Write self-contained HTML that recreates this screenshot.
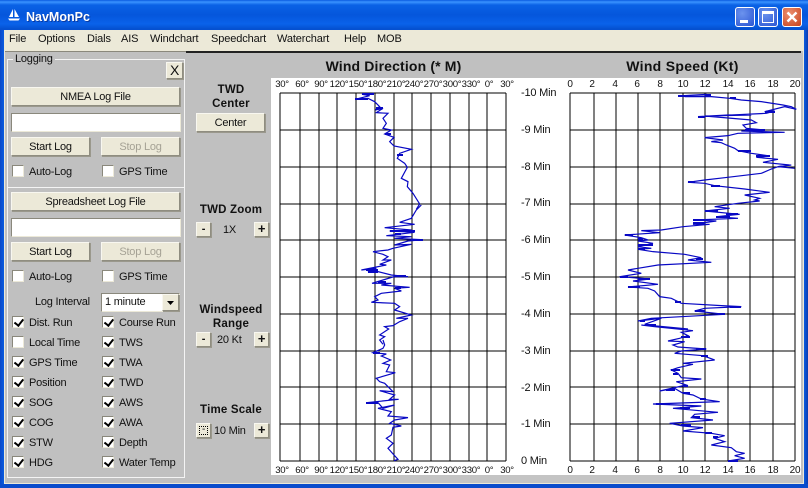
<!DOCTYPE html>
<html><head><meta charset="utf-8">
<style>
html,body{margin:0;padding:0}
body{width:808px;height:488px;overflow:hidden;position:relative;background:#c0c0c0;font-family:"Liberation Sans",sans-serif;font-size:11px;letter-spacing:-.22px;color:#111}
.a{position:absolute;white-space:nowrap}
.btn{position:absolute;box-sizing:border-box;background:#ece9d8;border:1px solid;border-color:#f8f7f0 #8f8d80 #8f8d80 #f8f7f0;box-shadow:1px 1px 0 #9a988c;text-align:center;color:#111;white-space:nowrap}
.dis{color:#a5a295}
.inp{position:absolute;box-sizing:border-box;background:#fff;border:1px solid;border-color:#8a887c #ece9d8 #ece9d8 #8a887c}
.cb{position:absolute;box-sizing:border-box;width:12px;height:12px;background:#fff;border:1px solid;border-color:#8a887c #ece9d8 #ece9d8 #8a887c}
.cb.c::after{content:"";position:absolute;left:2.5px;top:-.5px;width:3.5px;height:7px;border:solid #000;border-width:0 2px 2px 0;transform:rotate(38deg)}
.h{position:absolute;font-weight:bold;font-size:11.5px;text-align:center;color:#111;line-height:14px;letter-spacing:.2px}
.m{position:absolute;top:33px;font-size:11px;letter-spacing:-.12px;color:#111}
</style></head><body>

<!-- window frame -->
<div class="a" style="left:0;top:0;width:808px;height:30px;background:linear-gradient(180deg,#0a5be0 0,#3a93ff 2px,#0a62e6 5px,#0556dc 15px,#0a62ea 24px,#0550d0 29px)"></div>
<div class="a" style="left:0;top:30px;width:4px;height:458px;background:linear-gradient(90deg,#0a48c8,#0a5ce0)"></div>
<div class="a" style="left:804px;top:30px;width:4px;height:458px;background:linear-gradient(90deg,#0a5ce0,#0a3cb0)"></div>
<div class="a" style="left:0;top:484px;width:808px;height:4px;background:#0a4ccc"></div>
<div class="a" style="left:4px;top:30px;width:800px;height:21px;background:#ece9d8"></div>
<div class="a" style="left:4px;top:483px;width:800px;height:1px;background:#ece9d8"></div>
<div class="a" style="left:803px;top:30px;width:1px;height:454px;background:#ece9d8"></div>
<div class="a" style="left:4px;top:30px;width:1px;height:454px;background:#ece9d8"></div>
<div class="a" style="left:186px;top:51px;width:615px;height:2px;background:#222"></div>
<div class="a" style="left:5px;top:51px;width:181px;height:1px;background:#8a887c"></div>

<!-- title -->
<svg class="a" style="left:7px;top:8px" width="14" height="14" viewBox="0 0 14 14"><path d="M6 1L6 9L2 9ZM7.5 1L12 9L7.5 9ZM1 10.5H13L11.5 12.5H2.5Z" fill="#fff"/></svg>
<div class="a" style="left:26px;top:10px;font-size:12.5px;letter-spacing:0;font-weight:bold;color:#fff;text-shadow:1px 1px 0 #0a3aa0">NavMonPc</div>

<!-- title buttons -->
<div class="a" style="left:735px;top:7px;width:20px;height:20px;box-sizing:border-box;border:1px solid #fff;border-radius:3px;background:radial-gradient(circle at 35% 30%,#6c93ee,#2a55d2)"><div class="a" style="left:4px;top:12px;width:8px;height:3px;background:#fff"></div></div>
<div class="a" style="left:758px;top:7px;width:20px;height:20px;box-sizing:border-box;border:1px solid #fff;border-radius:3px;background:radial-gradient(circle at 35% 30%,#6c93ee,#2a55d2)"><div class="a" style="left:3px;top:3px;width:12px;height:12px;box-sizing:border-box;border:1px solid #fff;border-top-width:3px"></div></div>
<div class="a" style="left:782px;top:7px;width:20px;height:20px;box-sizing:border-box;border:1px solid #fff;border-radius:3px;background:radial-gradient(circle at 35% 30%,#eb8f70,#c8421c)"><svg class="a" style="left:3px;top:3px" width="12" height="12"><path d="M1.5 1.5L10.5 10.5M10.5 1.5L1.5 10.5" stroke="#fff" stroke-width="2.4"/></svg></div>

<!-- menu -->
<div class="m" style="left:9px">File</div>
<div class="m" style="left:38px">Options</div>
<div class="m" style="left:87px">Dials</div>
<div class="m" style="left:121px">AIS</div>
<div class="m" style="left:150px">Windchart</div>
<div class="m" style="left:211px">Speedchart</div>
<div class="m" style="left:277px">Waterchart</div>
<div class="m" style="left:344px">Help</div>
<div class="m" style="left:377px">MOB</div>

<!-- logging group -->
<div class="a" style="left:7px;top:59px;width:178px;height:419px;box-sizing:border-box;border:1px solid #f4f4f4"></div>
<div class="a" style="left:13px;top:53px;padding:0 2px;background:#c0c0c0;height:13px;line-height:13px">Logging</div>
<div class="btn" style="left:166px;top:62px;width:17px;height:17px;font-weight:normal;font-size:14px;line-height:15px">X</div>
<div class="btn" style="left:11px;top:87px;width:169px;height:19px;line-height:19px">NMEA Log File</div>
<div class="inp" style="left:11px;top:113px;width:170px;height:19px"></div>
<div class="btn" style="left:11px;top:137px;width:79px;height:19px;line-height:19px">Start Log</div>
<div class="btn dis" style="left:101px;top:137px;width:79px;height:19px;line-height:19px">Stop Log</div>
<div class="cb" style="left:12px;top:165px"></div><div class="a" style="left:29px;top:166px">Auto-Log</div>
<div class="cb" style="left:102px;top:165px"></div><div class="a" style="left:119px;top:166px">GPS Time</div>
<div class="a" style="left:7px;top:187px;width:178px;height:1px;background:#f4f4f4"></div>
<div class="btn" style="left:11px;top:192px;width:169px;height:19px;line-height:19px">Spreadsheet Log File</div>
<div class="inp" style="left:11px;top:218px;width:170px;height:19px"></div>
<div class="btn" style="left:11px;top:242px;width:79px;height:19px;line-height:19px">Start Log</div>
<div class="btn dis" style="left:101px;top:242px;width:79px;height:19px;line-height:19px">Stop Log</div>
<div class="cb" style="left:12px;top:270px"></div><div class="a" style="left:29px;top:271px">Auto-Log</div>
<div class="cb" style="left:102px;top:270px"></div><div class="a" style="left:119px;top:271px">GPS Time</div>
<div class="a" style="left:35px;top:296px">Log Interval</div>
<div class="inp" style="left:101px;top:293px;width:79px;height:19px;line-height:17px;padding-left:3px">1 minute
<div class="btn" style="right:0;top:0;width:17px;height:17px"><svg class="a" style="left:4px;top:6px" width="8" height="5"><path d="M0 0H7L3.5 4Z" fill="#000"/></svg></div></div>

<div class="cb c" style="left:12px;top:316px"></div><div class="a" style="left:29px;top:317px">Dist. Run</div>
<div class="cb" style="left:12px;top:336px"></div><div class="a" style="left:29px;top:337px">Local Time</div>
<div class="cb c" style="left:12px;top:356px"></div><div class="a" style="left:29px;top:357px">GPS Time</div>
<div class="cb c" style="left:12px;top:376px"></div><div class="a" style="left:29px;top:377px">Position</div>
<div class="cb c" style="left:12px;top:396px"></div><div class="a" style="left:29px;top:397px">SOG</div>
<div class="cb c" style="left:12px;top:416px"></div><div class="a" style="left:29px;top:417px">COG</div>
<div class="cb c" style="left:12px;top:436px"></div><div class="a" style="left:29px;top:437px">STW</div>
<div class="cb c" style="left:12px;top:456px"></div><div class="a" style="left:29px;top:457px">HDG</div>
<div class="cb c" style="left:102px;top:316px"></div><div class="a" style="left:119px;top:317px">Course Run</div>
<div class="cb c" style="left:102px;top:336px"></div><div class="a" style="left:119px;top:337px">TWS</div>
<div class="cb c" style="left:102px;top:356px"></div><div class="a" style="left:119px;top:357px">TWA</div>
<div class="cb c" style="left:102px;top:376px"></div><div class="a" style="left:119px;top:377px">TWD</div>
<div class="cb c" style="left:102px;top:396px"></div><div class="a" style="left:119px;top:397px">AWS</div>
<div class="cb c" style="left:102px;top:416px"></div><div class="a" style="left:119px;top:417px">AWA</div>
<div class="cb c" style="left:102px;top:436px"></div><div class="a" style="left:119px;top:437px">Depth</div>
<div class="cb c" style="left:102px;top:456px"></div><div class="a" style="left:119px;top:457px">Water Temp</div>

<!-- middle controls -->
<div class="h" style="left:190px;top:83px;width:82px">TWD<br>Center</div>
<div class="btn" style="left:196px;top:113px;width:69px;height:19px;line-height:19px">Center</div>
<div class="h" style="left:190px;top:203px;width:82px">TWD Zoom</div>
<div class="btn" style="left:196px;top:222px;width:15px;height:15px;line-height:12px;font-weight:bold">-</div>
<div class="a" style="left:223px;top:224px">1X</div>
<div class="btn" style="left:254px;top:222px;width:15px;height:15px;line-height:12px;font-weight:bold;font-size:13px">+</div>
<div class="h" style="left:190px;top:303px;width:82px">Windspeed<br>Range</div>
<div class="btn" style="left:196px;top:332px;width:15px;height:15px;line-height:12px;font-weight:bold">-</div>
<div class="a" style="left:217px;top:334px">20 Kt</div>
<div class="btn" style="left:254px;top:332px;width:15px;height:15px;line-height:12px;font-weight:bold;font-size:13px">+</div>
<div class="h" style="left:190px;top:403px;width:82px">Time Scale</div>
<div class="btn" style="left:196px;top:423px;width:15px;height:15px"><div class="a" style="left:2px;top:2px;width:9px;height:9px;box-sizing:border-box;border:1px dotted #000;line-height:5px;font-size:10px;text-align:center">-</div></div>
<div class="a" style="left:214px;top:425px">10 Min</div>
<div class="btn" style="left:254px;top:423px;width:15px;height:15px;line-height:12px;font-weight:bold;font-size:13px">+</div>

<!-- chart area -->
<div class="a" style="left:271px;top:78px;width:530px;height:397px;background:#fff"></div>
<div class="a" style="left:271px;top:475px;width:530px;height:8px;background:#c4c4c4"></div>
<div class="a" style="left:262px;top:58px;width:263px;text-align:center;font-size:14px;font-weight:bold;letter-spacing:.15px">Wind Direction (* M)</div>
<div class="a" style="left:551px;top:58px;width:263px;text-align:center;font-size:14px;font-weight:bold;letter-spacing:.3px">Wind Speed (Kt)</div>

<svg class="a" style="left:0;top:0" width="808" height="488" viewBox="0 0 808 488" font-family="Liberation Sans, sans-serif" font-size="10.5" fill="#111">
<g stroke="#000" stroke-width="1.2" shape-rendering="crispEdges">
<path d="M280 93V461M300 93V461M319 93V461M337 93V461M356 93V461M375 93V461M394 93V461M412 93V461M431 93V461M450 93V461M469 93V461M487 93V461M506 93V461"/>
<path d="M280 93H506M280 130H506M280 167H506M280 204H506M280 240H506M280 277H506M280 314H506M280 351H506M280 387H506M280 424H506M280 461H506"/>
<path d="M570 93V461M594 93V461M616 93V461M638 93V461M660 93V461M683 93V461M705 93V461M728 93V461M750 93V461M773 93V461M795 93V461"/>
<path d="M570 93H795M570 130H795M570 167H795M570 204H795M570 240H795M570 277H795M570 314H795M570 351H795M570 387H795M570 424H795M570 461H795"/>
</g>
<g text-anchor="middle" font-size="9.6" letter-spacing="-.3">
<text x="282" y="87">30°</text><text x="302" y="87">60°</text><text x="321" y="87">90°</text><text x="339" y="87">120°</text><text x="358" y="87">150°</text><text x="377" y="87">180°</text><text x="396" y="87">210°</text><text x="414" y="87">240°</text><text x="433" y="87">270°</text><text x="452" y="87">300°</text><text x="471" y="87">330°</text><text x="489" y="87">0°</text><text x="507" y="87">30°</text>
<text x="282" y="473">30°</text><text x="302" y="473">60°</text><text x="321" y="473">90°</text><text x="339" y="473">120°</text><text x="358" y="473">150°</text><text x="377" y="473">180°</text><text x="396" y="473">210°</text><text x="414" y="473">240°</text><text x="433" y="473">270°</text><text x="452" y="473">300°</text><text x="471" y="473">330°</text><text x="489" y="473">0°</text><text x="507" y="473">30°</text>
</g>
<g text-anchor="middle" font-size="10">
<text x="570" y="87">0</text><text x="592" y="87">2</text><text x="615" y="87">4</text><text x="637" y="87">6</text><text x="660" y="87">8</text><text x="683" y="87">10</text><text x="705" y="87">12</text><text x="728" y="87">14</text><text x="750" y="87">16</text><text x="773" y="87">18</text><text x="795" y="87">20</text>
<text x="570" y="473">0</text><text x="592" y="473">2</text><text x="615" y="473">4</text><text x="637" y="473">6</text><text x="660" y="473">8</text><text x="683" y="473">10</text><text x="705" y="473">12</text><text x="728" y="473">14</text><text x="750" y="473">16</text><text x="773" y="473">18</text><text x="795" y="473">20</text>
</g>
<g font-size="11" letter-spacing="-.2">
<text x="521" y="96">-10 Min</text><text x="521" y="133">-9 Min</text><text x="521" y="170">-8 Min</text><text x="521" y="206">-7 Min</text><text x="521" y="243">-6 Min</text><text x="521" y="280">-5 Min</text><text x="521" y="317">-4 Min</text><text x="521" y="354">-3 Min</text><text x="521" y="391">-2 Min</text><text x="521" y="427">-1 Min</text><text x="521" y="464">0 Min</text>
</g>

<g fill="none" stroke="#0808c4" stroke-width="3.6" stroke-linejoin="miter">
<!-- direction -->
<polyline transform="translate(268,50) scale(.3333)" points="318,130 282,133 305,137 262,148 300,145 320,155 335,170 322,180 345,175 325,188 360,190 345,205 355,220 345,235 370,240 350,252 378,262 365,275 378,288 430,298 395,310 388,325 410,340 418,352 400,385 420,395 418,410 435,430 455,462 445,478"/>
<polyline transform="translate(268,205) scale(.3333)" points="460,0 445,15 430,40 395,52 440,58 350,68 430,75 365,78 440,82 355,92 430,95 380,100 465,104 420,108 380,120 430,118 375,130 360,135 315,140 345,148 360,155 345,165 370,165 335,178 355,180 280,195 325,190 300,200 330,200 370,210 420,215 378,215 345,225 312,235 370,235 340,240 425,247 380,250 400,258 340,265 320,275 330,285 310,292 380,295 395,305 380,315 430,330 385,340 420,340 395,350 375,362 350,365 362,372 335,390 350,395 335,405 345,418"/>
<polyline transform="translate(268,340) scale(.3333)" points="345,0 350,15 345,25 315,38 355,42 340,48 368,60 345,70 365,75 355,95 382,98 325,115 335,125 350,130 375,155 335,152 380,165 365,178 392,178 295,188 330,188 345,205 380,195 330,205 370,215 360,228 420,233 380,240 365,250 400,258 375,262 370,285 355,295 375,310 360,325 378,345 390,358 378,362"/>
<!-- speed -->
<polyline transform="translate(538,0) scale(.3333)" points="420,288 505,283 510,288 440,290 520,290 575,295 610,300 670,305 735,315 760,320 775,328 740,320 680,335 710,333 685,340 480,350 570,345 640,345 500,348 640,360 655,368 615,375 625,385 680,390 610,393 740,397 600,400 570,407 500,413 555,420 520,425 550,428 565,435 590,445 600,452 640,460 695,468 655,472 720,478 675,487 755,495 720,500 770,505"/>
<polyline transform="translate(538,165) scale(.3333)" points="760,0 720,5 700,12 670,25 560,38 500,45 450,52 500,55 530,62 620,72 695,82 620,90 665,100 650,105 665,108 600,115 530,125 575,130 500,138 605,148 535,155 600,160 470,165 535,168 465,178 515,178 435,185 370,195 310,197 365,203 260,210 310,218 330,225 300,228 345,235 300,245 340,250 300,253 345,260 440,268 490,278 450,285 520,292 360,300 300,310 270,315 310,325 245,335 335,342 285,348 360,358 270,366 330,370 350,378 365,395 400,400 430,415 550,422 610,425 500,430 470,438 560,448 340,460 300,468 370,460 320,478 355,483 450,492"/>
<polyline transform="translate(538,325) scale(.3333)" points="310,0 350,5 420,12 465,17 430,22 450,32 425,40 390,48 440,50 405,60 420,66 505,72 430,78 410,85 495,92 530,105 435,115 465,118 420,128 400,135 420,145 430,158 490,162 415,170 445,180 365,198 410,190 435,205 465,210 490,222 545,230 345,237 490,243 405,250 540,262 470,268 460,278 525,285 395,295 435,303 495,308 435,318 520,325 560,332 530,340 560,350 520,360 580,368 595,380 620,385 590,392 620,400 570,408"/>
</g>
<!-- dense (thick) runs of the traces, aligned to the trace positions -->
<g fill="none" stroke="#0808c4" stroke-width="2" shape-rendering="crispEdges">
<path d="M362 94H374M355 99H368M376 108H383M385 134H391M397 155H403"/>
<path d="M390 231H415M395 234H401M411 240H423M366 270H378M368 272H378M395 276H406M378 282H386M395 288H401"/>
<path d="M366 403H378M373 353H380"/>
<path d="M678 96H685M705 95H711M730 98H736M765 112H775M698 117H705M745 130H765M738 151H751M756 156H770"/>
<path d="M688 182H695M711 186H720M705 211H718M716 217H730M726 214H738M693 220H705M693 223H705M625 235H633M638 239H643M638 245H653M638 249H645M696 259H703M620 277H628M638 279H650M628 287H640M675 302H681M730 307H741M695 311H705M718 314H725M640 321H645M646 325H656"/>
<path d="M681 337H690M696 349H706M701 356H708M671 370H680M673 374H678M683 386H688M666 390H675M683 393H690M700 399H706M656 404H670M680 408H690M693 417H700M681 425H691M705 433H712M713 437H718M728 461H738"/>
</g>
</svg>
</body></html>
